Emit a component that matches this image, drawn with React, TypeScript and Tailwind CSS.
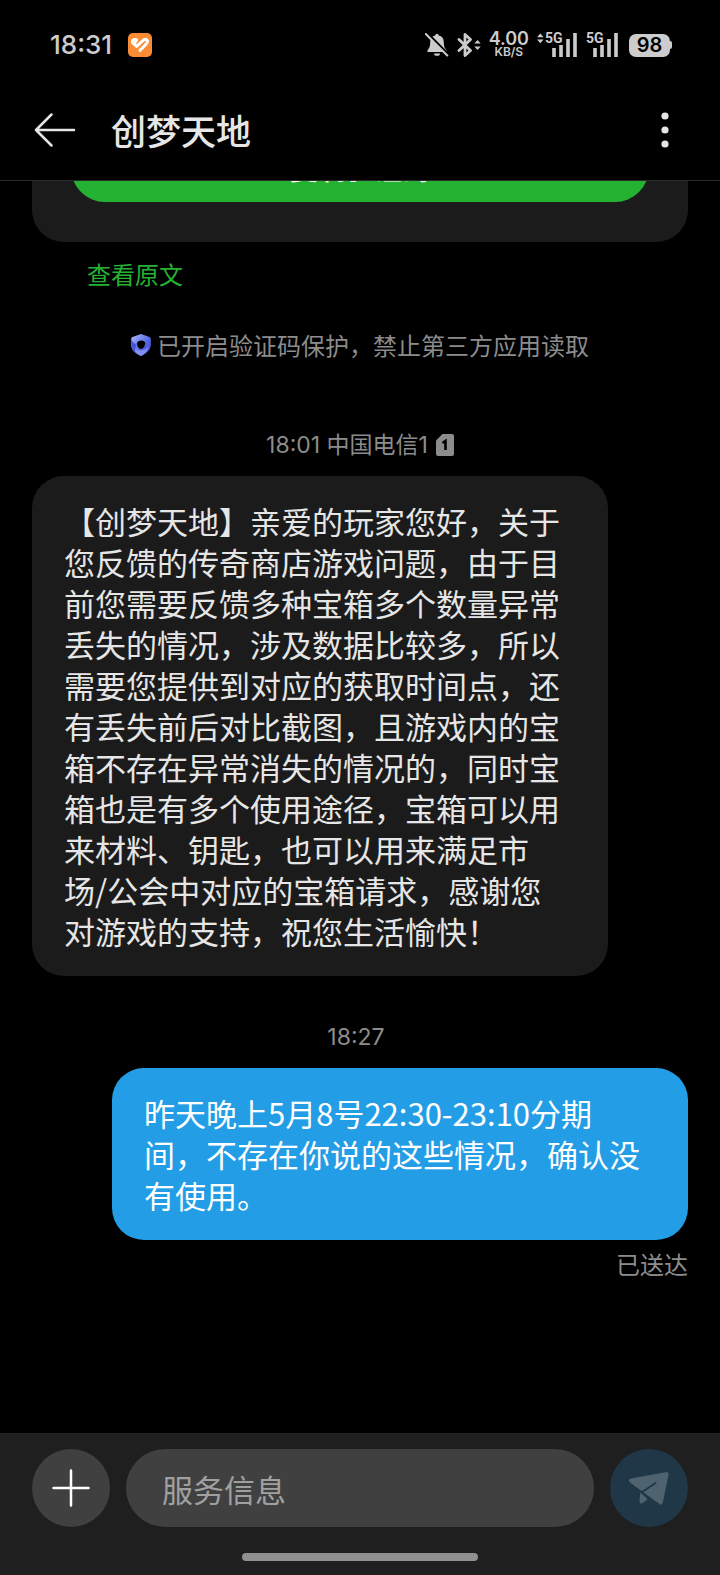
import React from "react";

const FONT = "font-['Noto_Sans_CJK_SC',sans-serif]";

function StatusBar() {
  return (
    <div className="flex h-[90px] items-center justify-between pl-[50px] pr-12 text-[#cccccc]">
      <div className="flex items-center gap-4">
        <span className="font-['Inter',sans-serif] text-[26px] leading-8 font-medium">18:31</span>
        <svg viewBox="0 0 24 24" className="size-6" aria-hidden="true">
          <rect width="24" height="24" rx="5" fill="#fb8b35" />
          <path d="M3.200 10.200C2.200 7 5 4.200 8 5.200l2.400 1.200L6.600 12.800C5 12 3.700 11.400 3.200 10.200z" fill="#fff" />
          <path d="M8.600 6.800L5.800 10.600 8.600 13.400 15.400 7.200C18 5 20.800 8 18.600 10.400L12 17.400" fill="none" stroke="#fff" strokeWidth="3" strokeLinecap="round" strokeLinejoin="round" />
          <path d="M14.800 11.200L10.200 15.600" fill="none" stroke="#fb8b35" strokeWidth="1.200" strokeLinecap="round" />
        </svg>
      </div>
      <div className="flex items-center gap-2">
        <svg viewBox="0 0 24 24" className="size-6" aria-hidden="true">
          <path d="M12 .8a1.8 1.8 0 0 1 1.8 1.6c3.3.7 5 3.200 5 6.600 0 4.500.800 6 2.700 8.200v1.800H2.500v-1.800C4.400 15 5.200 13.500 5.200 9c0-3.400 1.700-5.900 5-6.600A1.800 1.800 0 0 1 12 .8zM9 20.500h6a3 2.300 0 0 1-6 0z" fill="currentColor" />
          <path d="M1.700 0L24 22.300" stroke="#000" strokeWidth="3" />
          <path d="M.8 1l21.500 21.500" stroke="currentColor" strokeWidth="2" strokeLinecap="round" />
        </svg>
        <svg viewBox="0 0 24 24" className="size-6" aria-hidden="true">
          <path d="M2 6.500l11.500 11L8 22.500v-21l5.500 5L2 17.500" fill="none" stroke="currentColor" strokeWidth="2.800" strokeLinejoin="round" strokeLinecap="round" />
          <path d="M17.300 10.500l3.200-3.500 3.200 3.500zM17.300 13.500l3.200 3.500 3.200-3.500z" fill="currentColor" />
        </svg>
        <div className="flex flex-col items-center font-['Inter',sans-serif] font-semibold">
          <span className="text-[18px] leading-[14px]">4.00</span>
          <span className="text-[12px] leading-3">KB/S</span>
        </div>
        <Signal arrows />
        <Signal />
        <div className="flex items-center">
          <span className="flex h-[23px] w-[41px] items-center justify-center rounded-[7px] bg-[#cccccc] font-['Inter',sans-serif] text-[20px] leading-6 font-semibold text-black">
            98
          </span>
          <span className="h-2 w-0.5 rounded-r-sm bg-[#cccccc]" />
        </div>
      </div>
    </div>
  );
}

function Signal({ arrows = false }: { arrows?: boolean }) {
  return (
    <svg viewBox={arrows ? "0 0 41 26" : "8 0 35 26"} className={arrows ? "h-[26px] w-[41px]" : "h-[26px] w-[35px]"} aria-hidden="true">
      {arrows && <path d="M0 5.200L3.300 1.500l3.300 3.700zM0 7.500l3.300 3.700 3.300-3.700z" fill="currentColor" />}
      <text x="8" y="11" fontSize="14" fontWeight="700" fontFamily="Roboto, sans-serif" fill="currentColor">5G</text>
      <path d="M17 16v9M24 13v12M31 7V25M38 1V25" stroke="currentColor" strokeWidth="3.600" strokeLinecap="butt" />
    </svg>
  );
}

function Header() {
  return (
    <header className="flex h-[91px] items-center border-b border-[#2a2a2a] pr-[46px] pb-[11px] pl-[34px] text-[#e6e6e6]">
      <button type="button" aria-label="返回">
        <svg viewBox="0 0 42 36" className="h-9 w-[42px]" fill="none" stroke="currentColor" strokeWidth="2.500" strokeLinecap="round" strokeLinejoin="round" aria-hidden="true">
          <path d="M17.500 2.500L2 18l15.500 15.500M2 18h38" />
        </svg>
      </button>
      <h1 className="ml-[35px] flex-1 text-[35px] leading-[48px] font-medium">创梦天地</h1>
      <button type="button" aria-label="更多">
        <svg viewBox="0 0 18 36" className="h-9 w-[18px]" fill="currentColor" aria-hidden="true">
          <circle cx="9" cy="4" r="3.600" />
          <circle cx="9" cy="18" r="3.600" />
          <circle cx="9" cy="32" r="3.600" />
        </svg>
      </button>
    </header>
  );
}

function ShieldIcon() {
  return (
    <svg viewBox="0 0 20 22" className="h-[22px] w-5" aria-hidden="true">
      <defs>
        <linearGradient id="shield" x1="0" y1="0" x2="1" y2="1">
          <stop offset="0" stopColor="#b0bcfa" />
          <stop offset="0.600" stopColor="#5263e4" />
          <stop offset="1" stopColor="#4353d6" />
        </linearGradient>
      </defs>
      <path d="M10 0l8.500 3q1.300.500 1.300 2v5.500c0 5-4 9-9.800 11.500C4.200 19.500.2 15.500.2 10.500V5q0-1.500 1.300-2z" fill="url(#shield)" />
      <path d="M.2 6c0 6 2.500 9.500 9.300 10.500 4 0 7-2.500 8-3.500-.8 4-3.500 7-7.500 9C4.200 19.500.2 15.500.2 10.500z" fill="#8290f2" />
      <path d="M.2 6v4.500c0 3 1.500 5.800 4 8C3.500 14.500 5 12 5.500 11 3.500 9.500 1.500 8 .2 6z" fill="#4454dc" />
      <path d="M7.500 7.200q2.800-1.200 5.500 0 1.300.800 1.200 2.600-.4 3.200-2.800 4.800-1.400.8-2.800 0Q6 13 5.900 9.800 6 8 7.500 7.200z" fill="#000" />
    </svg>
  );
}

function SimIcon() {
  return (
    <svg viewBox="0 0 18 22" className="h-[22px] w-[18px]" aria-hidden="true">
      <path d="M6.500 0H16a2 2 0 0 1 2 2v18a2 2 0 0 1-2 2H2a2 2 0 0 1-2-2V6.500z" fill="#8c8c8c" />
      <path d="M6.500 9l3-2v9" fill="none" stroke="#000" strokeWidth="2.600" />
    </svg>
  );
}

function Messages() {
  return (
    <main className="flex min-h-0 flex-1 flex-col justify-end overflow-hidden px-8 pb-[153px] text-[24px] leading-8 text-[#8c8c8c]">
      <section className="shrink-0 rounded-[32px] bg-[#1b1b1b] px-[39px] pt-10 pb-10">
        <button type="button" className="block h-[68px] w-full rounded-[34px] bg-[#25b233] text-[28px] font-medium text-white">
          复制验证码
        </button>
      </section>
      <a href="#original" className="mt-4 ml-[55px] self-start text-[#25b233]">查看原文</a>
      <p className="mt-[39px] flex items-center justify-center gap-1.5">
        <ShieldIcon />
        已开启验证码保护，禁止第三方应用读取
      </p>
      <p className="mt-[68px] flex items-center justify-center gap-2 font-['Inter','Noto_Sans_CJK_SC',sans-serif] text-[23px]">
        18:01 中国电信1
        <SimIcon />
      </p>
      <p className="mt-[15px] max-w-[576px] self-start rounded-[32px] bg-[#1b1b1b] pt-6 pr-10 pb-[25px] pl-8 text-[31px] leading-[41px] text-[#e6e6e6]">
        【创梦天地】亲爱的玩家您好，关于您反馈的传奇商店游戏问题，由于目前您需要反馈多种宝箱多个数量异常丢失的情况，涉及数据比较多，所以需要您提供到对应的获取时间点，还有丢失前后对比截图，且游戏内的宝箱不存在异常消失的情况的，同时宝箱也是有多个使用途径，宝箱可以用来材料、钥匙，也可以用来满足市场/公会中对应的宝箱请求，感谢您对游戏的支持，祝您生活愉快！
      </p>
      <p className="mt-[45px] pr-2 text-center font-['Inter',sans-serif] text-[23px]">18:27</p>
      <p className="mt-[15px] max-w-[576px] self-end rounded-[32px] bg-[#229de6] pt-6 pr-10 pb-[25px] pl-8 text-[31px] leading-[41px] text-white">
        昨天晚上5月8号22:30-23:10分期间，不存在你说的这些情况，确认没有使用。
      </p>
      <p className="mt-2 text-right">已送达</p>
    </main>
  );
}

function Composer() {
  return (
    <footer className="flex flex-col bg-[#1f1f1f] pt-4 pb-[14px]">
      <form className="flex items-center gap-4 px-8" onSubmit={(e) => e.preventDefault()}>
        <button type="button" aria-label="添加" className="flex size-[78px] shrink-0 items-center justify-center rounded-full bg-[#404040] text-white">
          <svg viewBox="0 0 38 38" className="size-[38px]" fill="none" stroke="currentColor" strokeWidth="2.500" strokeLinecap="round" aria-hidden="true">
            <path d="M19 1.500v35M1.500 19h35" />
          </svg>
        </button>
        <input
          type="text"
          aria-label="服务信息"
          placeholder="服务信息"
          className="h-[78px] min-w-0 flex-1 rounded-full bg-[#404040] px-9 text-[31px] text-white outline-none placeholder:text-[#a0a0a0]"
        />
        <button type="submit" aria-label="发送" className="flex size-[78px] shrink-0 items-center justify-center rounded-full bg-[#1f3747] text-[#4e6270]">
          <svg viewBox="0 0 42 36" className="h-9 w-[42px]" aria-hidden="true">
            <path d="M3 8.500L37.500 2.200Q41 1.600 40.500 5L34.800 32.500Q34 36 31 33.800L2 12.500Q-.5 9.500 3 8.500z" fill="currentColor" />
            <path d="M12.500 21L19.500 29.500 14.500 33Q11.500 34.500 11.500 31.500z" fill="currentColor" />
            <path d="M13.500 22.500L27.500 13M12.500 21.800L22.500 29.500" stroke="#1f3747" strokeWidth="2" strokeLinecap="round" fill="none" />
          </svg>
        </button>
      </form>
      <div className="mx-auto mt-[26px] h-2 w-[236px] rounded-full bg-[#909090]" />
    </footer>
  );
}

export default function App() {
  return (
    <div className={`flex h-screen flex-col bg-black ${FONT}`}>
      <StatusBar />
      <Header />
      <Messages />
      <Composer />
    </div>
  );
}
